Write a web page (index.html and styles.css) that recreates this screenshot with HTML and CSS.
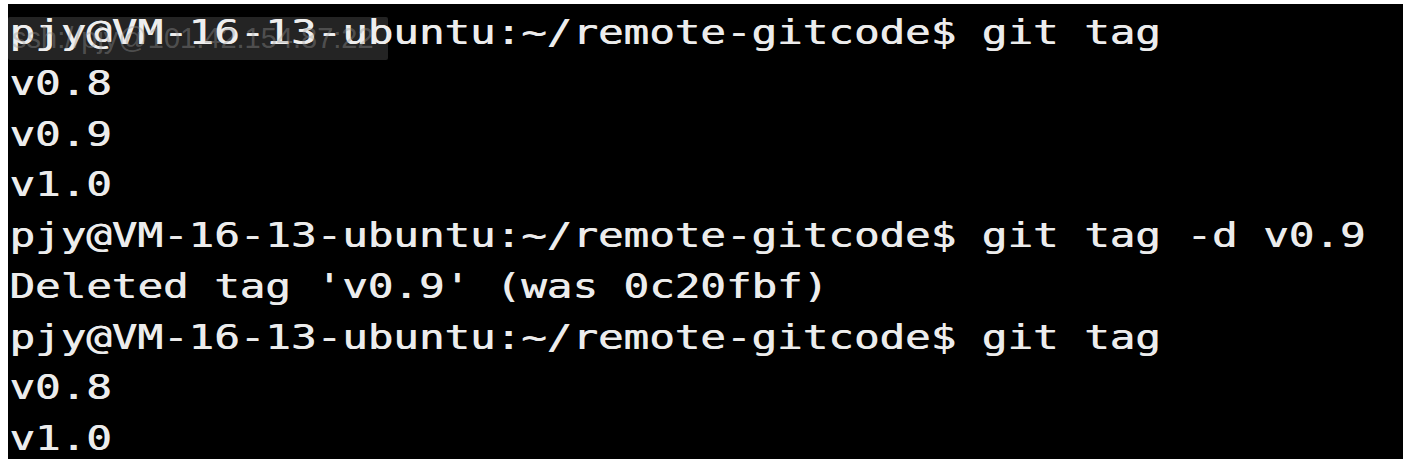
FILE: index.html
```html
<!DOCTYPE html>
<html>
<head>
<meta charset="utf-8">
<link rel="stylesheet" href="styles.css">
</head>
<body>
<div class="terminal">
  <div class="lines">
    <div class="line">pjy@VM-16-13-ubuntu:~/remote-gitcode$ git tag</div>
    <div class="line">v0.8</div>
    <div class="line">v0.9</div>
    <div class="line">v1.0</div>
    <div class="line">pjy@VM-16-13-ubuntu:~/remote-gitcode$ git tag -d v0.9</div>
    <div class="line">Deleted tag 'v0.9' (was 0c20fbf)</div>
    <div class="line">pjy@VM-16-13-ubuntu:~/remote-gitcode$ git tag</div>
    <div class="line">v0.8</div>
    <div class="line">v1.0</div>
  </div>
  <div class="watermark">ssh://pjy@101.42.154.87:22</div>
</div>
</body>
</html>
```
FILE: styles.css
```css
html, body {
  margin: 0;
  padding: 0;
  background: #ffffff;
}
.terminal {
  position: relative;
  margin: 4px 0 0 8px;
  width: 1395px;
  height: 455px;
  background: #000000;
  overflow: hidden;
}
.lines {
  padding: 3px 0 0 1px;
  transform: scaleX(1.25);
  transform-origin: left top;
  font-family: "DejaVu Sans Mono", monospace;
  font-size: 34px;
  line-height: 50.75px;
  color: #ececec;
  text-shadow: 0.6px 0 0 #ececec;
}
.line {
  white-space: pre;
}
.watermark {
  position: absolute;
  left: 0;
  top: 13px;
  width: 380px;
  height: 43px;
  box-sizing: border-box;
  padding-left: 4px;
  background: rgba(255, 255, 255, 0.14);
  color: rgba(150, 150, 150, 0.4);
  font-family: "Liberation Sans", Arial, sans-serif;
  font-size: 29px;
  line-height: 43px;
  border-radius: 2px;
  white-space: nowrap;
}
```
